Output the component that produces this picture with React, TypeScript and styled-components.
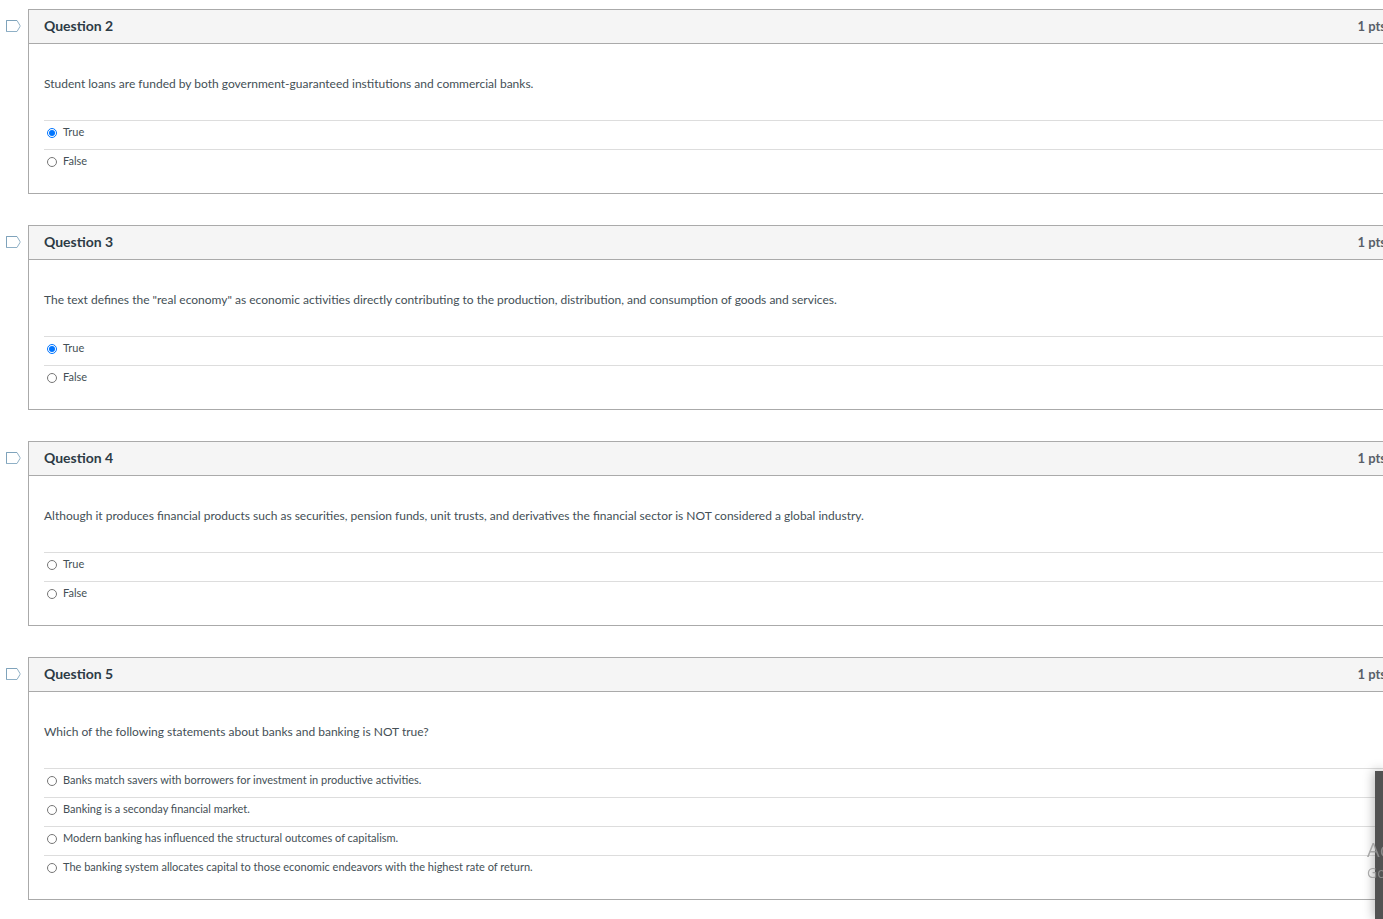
import React, { useState } from "react";
import styled, { createGlobalStyle } from "styled-components";

const GlobalStyle = createGlobalStyle`
  *, *::before, *::after { box-sizing: border-box; }
  body {
    margin: 0;
    background: #ffffff;
    color: #444f56;
    font-family: Lato, "Liberation Sans", sans-serif;
    font-size: 12px;
    line-height: 20px;
    overflow-x: hidden;
  }
`;

const Page = styled.main`
  display: flex;
  flex-direction: column;
  gap: 31px;
  padding: 9px 0 16px 5px;
  overflow: hidden;
`;

const QuestionRow = styled.section`
  display: flex;
  align-items: flex-start;
  gap: 7px;
  margin-right: -19px;
`;

const FlagButton = styled.button`
  flex: none;
  display: flex;
  margin-top: 10px;
  padding: 0;
  border: 0;
  background: none;
  cursor: pointer;
`;

const Card = styled.div`
  flex: 1;
  min-width: 0;
  border: 1px solid #aaaaaa;
`;

const CardHeader = styled.header`
  display: flex;
  align-items: center;
  justify-content: space-between;
  height: 34px;
  padding: 0 15px 2px;
  background: #f5f5f5;
  border-bottom: 1px solid #aaaaaa;
`;

const Title = styled.h2`
  margin: 0;
  color: #2d3b45;
  font-size: 14px;
  font-weight: 700;
`;

const Points = styled.span`
  color: #595f69;
  font-size: 13px;
  font-weight: 700;
`;

const CardBody = styled.div`
  padding: 30px 15px 15px;
`;

const Fieldset = styled.fieldset`
  margin: 0;
  padding: 0;
  border: 0;
  min-width: 0;
`;

const Prompt = styled.legend`
  margin: 0 0 26px;
  padding: 0;
`;

const Answer = styled.label`
  display: flex;
  align-items: flex-start;
  gap: 6px;
  height: 29px;
  padding: 1px 3px 0;
  border-top: 1px solid #dddddd;
  font-size: 11px;
  cursor: pointer;
`;

const Radio = styled.input`
  flex: none;
  width: 10px;
  height: 10px;
  margin: 6px 0 0;
`;

const SidePanel = styled.aside`
  position: fixed;
  top: 771px;
  right: 0;
  bottom: 0;
  width: 8px;
  background: #525252;
  box-shadow: 0 0 12px rgba(0, 0, 0, 0.4);
`;

const Watermark = styled.div`
  position: fixed;
  left: calc(100% - 16px);
  top: 837px;
  color: rgba(150, 150, 150, 0.8);
  font-family: "Open Sans", sans-serif;
  font-size: 14px;
  line-height: 20px;
  white-space: nowrap;
  pointer-events: none;
`;

const WatermarkTitle = styled.div`
  font-size: 20px;
  line-height: 26px;
`;

interface Question {
  id: number;
  prompt: string;
  answers: string[];
  selected?: number;
}

const questions: Question[] = [
  {
    id: 2,
    prompt:
      "Student loans are funded by both government-guaranteed institutions and commercial banks.",
    answers: ["True", "False"],
    selected: 0,
  },
  {
    id: 3,
    prompt:
      'The text defines the "real economy" as economic activities directly contributing to the production, distribution, and consumption of goods and services.',
    answers: ["True", "False"],
    selected: 0,
  },
  {
    id: 4,
    prompt:
      "Although it produces financial products such as securities, pension funds, unit trusts, and derivatives the financial sector is NOT considered a global industry.",
    answers: ["True", "False"],
  },
  {
    id: 5,
    prompt: "Which of the following statements about banks and banking is NOT true?",
    answers: [
      "Banks match savers with borrowers for investment in productive activities.",
      "Banking is a seconday financial market.",
      "Modern banking has influenced the structural outcomes of capitalism.",
      "The banking system allocates capital to those economic endeavors with the highest rate of return.",
    ],
  },
];

function FlagIcon() {
  return (
    <svg width="16" height="14" viewBox="0 0 16 14" fill="none" aria-hidden="true">
      <path d="M1.5 1.5H12L15 6.5V7.5L12 12.5H1.5Z" stroke="#8fb0c6" />
      <path d="M1.5 12.5V1.5H12" stroke="#7fa3bb" />
    </svg>
  );
}

function QuestionCard({ question }: { question: Question }) {
  const [selected, setSelected] = useState(question.selected);
  return (
    <QuestionRow>
      <FlagButton type="button" aria-label={`Flag question ${question.id}`}>
        <FlagIcon />
      </FlagButton>
      <Card>
        <CardHeader>
          <Title>Question {question.id}</Title>
          <Points>1 pts</Points>
        </CardHeader>
        <CardBody>
          <Fieldset>
            <Prompt>{question.prompt}</Prompt>
            {question.answers.map((answer, index) => (
              <Answer key={answer}>
                <Radio
                  type="radio"
                  name={`question-${question.id}`}
                  checked={selected === index}
                  onChange={() => setSelected(index)}
                />
                {answer}
              </Answer>
            ))}
          </Fieldset>
        </CardBody>
      </Card>
    </QuestionRow>
  );
}

export default function App() {
  return (
    <>
      <GlobalStyle />
      <Page>
        {questions.map((question) => (
          <QuestionCard key={question.id} question={question} />
        ))}
      </Page>
      <SidePanel />
      <Watermark>
        <WatermarkTitle>Activate Windows</WatermarkTitle>
        Go to Settings
      </Watermark>
    </>
  );
}
